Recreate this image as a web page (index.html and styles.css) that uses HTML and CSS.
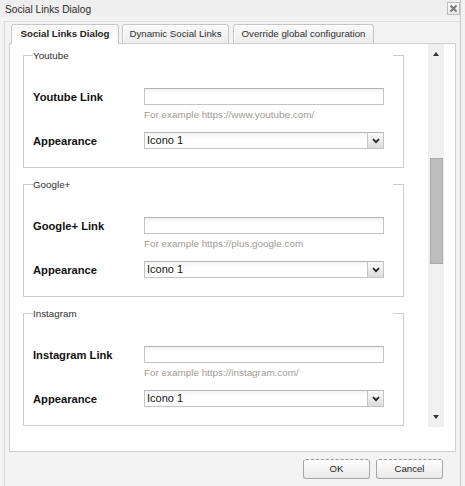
FILE: index.html
```html
<!DOCTYPE html>
<html>
<head>
<meta charset="utf-8">
<link rel="stylesheet" href="styles.css">
</head>
<body>
<div class="dialog">
  <div class="titlebar">
    <span class="title">Social Links Dialog</span>
    <span class="close"><svg width="11" height="11" viewBox="0 0 11 11"><path d="M2.5 2.5 L8.5 8.5 M8.5 2.5 L2.5 8.5" stroke="#7a7a7a" stroke-width="2" fill="none"/></svg></span>
  </div>
  <div class="body">
    <div class="tabs">
      <div class="tab active">Social Links Dialog</div>
      <div class="tab t2">Dynamic Social Links</div>
      <div class="tab t3">Override global configuration</div>
    </div>
    <div class="panel">
      <div class="scroll">
        <div class="content">
          <fieldset class="group">
            <legend>Youtube</legend>
            <div class="grid">
              <label class="lbl">Youtube Link</label>
              <div class="input"></div>
              <span></span>
              <div class="hint">For example https://www.youtube.com/</div>
              <label class="lbl row3">Appearance</label>
              <div class="select row3"><span class="val">Icono 1</span><span class="btn"><svg width="8" height="6" viewBox="0 0 8 6"><path d="M1 1.2 L4 4.2 L7 1.2" stroke="#222" stroke-width="1.8" fill="none"/></svg></span></div>
            </div>
          </fieldset>
          <fieldset class="group">
            <legend>Google+</legend>
            <div class="grid">
              <label class="lbl">Google+ Link</label>
              <div class="input"></div>
              <span></span>
              <div class="hint">For example https://plus.google.com</div>
              <label class="lbl row3">Appearance</label>
              <div class="select row3"><span class="val">Icono 1</span><span class="btn"><svg width="8" height="6" viewBox="0 0 8 6"><path d="M1 1.2 L4 4.2 L7 1.2" stroke="#222" stroke-width="1.8" fill="none"/></svg></span></div>
            </div>
          </fieldset>
          <fieldset class="group">
            <legend>Instagram</legend>
            <div class="grid">
              <label class="lbl">Instagram Link</label>
              <div class="input"></div>
              <span></span>
              <div class="hint">For example https://instagram.com/</div>
              <label class="lbl row3">Appearance</label>
              <div class="select row3"><span class="val">Icono 1</span><span class="btn"><svg width="8" height="6" viewBox="0 0 8 6"><path d="M1 1.2 L4 4.2 L7 1.2" stroke="#222" stroke-width="1.8" fill="none"/></svg></span></div>
            </div>
          </fieldset>
        </div>
        <div class="scrollbar">
          <div class="arrow-box"><span class="tri up"></span></div>
          <div class="track"><div class="thumb"></div></div>
          <div class="arrow-box"><span class="tri down"></span></div>
        </div>
      </div>
    </div>
    <div class="footer">
      <button class="button">OK</button>
      <button class="button">Cancel</button>
    </div>
  </div>
</div>
</body>
</html>
```

FILE: styles.css
```css
html, body {
  margin: 0;
  padding: 0;
  background: #f2f2f2;
  font-family: "Liberation Sans", Arial, sans-serif;
}

.dialog {
  width: 460px;
  height: 486px;
  border-right: 1px solid #c9c9c9;
  background: #f2f2f2;
  display: flex;
  flex-direction: column;
}

.titlebar {
  height: 21px;
  display: flex;
  align-items: flex-start;
  background: linear-gradient(#eeeeee, #efefef 15px, #f6f6f6);
  box-sizing: border-box;
}

.title {
  font-size: 10.2px;
  line-height: 20px;
  color: #2a2a2a;
  padding-left: 5px;
}

.close {
  margin-left: auto;
  margin-top: 2px;
  margin-right: 0;
  width: 11px;
  height: 11px;
  border: 1px solid #bdbdbd;
  background: linear-gradient(#fbfbfb, #e6e6e6);
  display: flex;
}

.body {
  flex: 1;
  margin-left: 4px;
  border-left: 1px solid #d9d9d9;
  border-top: 1px solid #dcdcdc;
  display: flex;
  flex-direction: column;
  background: #f3f3f3;
}

.tabs {
  display: flex;
  margin-top: 2px;
  margin-left: 6px;
  height: 19px;
  position: relative;
  z-index: 2;
}

.tab {
  box-sizing: border-box;
  height: 19px;
  border: 1px solid #c6c6c6;
  border-bottom: none;
  border-radius: 3px 3px 0 0;
  background: linear-gradient(#fafafa, #ececec);
  font-size: 9.7px;
  color: #2e2e2e;
  line-height: 18px;
  text-align: center;
  box-shadow: inset 1px 1px 0 #ffffff;
}

.tab.active {
  width: 108px;
  height: 20px;
  font-weight: bold;
  color: #222;
  background: linear-gradient(#f6f6f6, #ffffff 17px);
}

.tab.t2 {
  width: 107px;
  margin-left: 3px;
}

.tab.t3 {
  width: 141px;
  margin-left: 4px;
}

.panel {
  margin-left: 4px;
  width: 447px;
  height: 409px;
  box-sizing: border-box;
  border: 1px solid #d0d0d0;
  background: #ffffff;
  padding-right: 11px;
  padding-bottom: 24px;
  position: relative;
  z-index: 1;
}

.scroll {
  display: flex;
  height: 383px;
}

.content {
  width: 418px;
  height: 383px;
  overflow: hidden;
  box-sizing: border-box;
  padding-top: 5px;
  padding-left: 13px;
  display: flex;
  flex-direction: column;
  gap: 10px;
}

.group {
  margin: 0;
  min-width: 0;
  width: 381px;
  box-sizing: border-box;
  border: 1px solid #cccccc;
  padding: 0 9px 18px 9px;
  flex: none;
}

.group legend {
  padding: 0;
  width: 360px;
  font-size: 9.8px;
  line-height: 13px;
  color: #2e2e2e;
  background: #ffffff;
}

.grid {
  display: grid;
  grid-template-columns: 111px 240px;
  align-items: center;
  margin-top: 26px;
}

.lbl {
  font-size: 11.2px;
  font-weight: bold;
  color: #111;
  line-height: 17px;
  position: relative;
  top: 1px;
}

.input {
  height: 17px;
  box-sizing: border-box;
  border: 1px solid #c3c3c3;
  border-top-color: #b3b3b3;
  background: linear-gradient(#f1f1f1, #ffffff 5px);
}

.hint {
  grid-column: 2;
  font-size: 9.9px;
  line-height: 14px;
  color: #a09a95;
  margin-top: 3px;
}

.row3 {
  margin-top: 10px;
}

.select {
  height: 17px;
  box-sizing: border-box;
  border: 1px solid #c3c3c3;
  border-top-color: #b3b3b3;
  background: linear-gradient(#f4f4f4, #ffffff 6px);
  display: flex;
}

.select .val {
  flex: 1;
  font-size: 11px;
  line-height: 15px;
  padding-left: 2px;
  color: #111;
}

.select .btn {
  width: 15px;
  border-left: 1px solid #c6c6c6;
  background: linear-gradient(#fbfbfb, #dddddd);
  display: flex;
  align-items: center;
  justify-content: center;
}

.scrollbar {
  width: 16px;
  height: 383px;
  background: #f0f0f0;
  display: flex;
  flex-direction: column;
}

.arrow-box {
  height: 20px;
  display: flex;
  align-items: center;
  justify-content: center;
  flex: none;
}

.tri {
  width: 0;
  height: 0;
  border-left: 3.5px solid transparent;
  border-right: 3.5px solid transparent;
}

.tri.up {
  border-bottom: 4px solid #333;
}

.tri.down {
  border-top: 4px solid #333;
}

.track {
  flex: 1;
}

.thumb {
  margin-top: 94px;
  margin-left: 2px;
  width: 13px;
  height: 106px;
  box-sizing: border-box;
  background: #bdbdbd;
  border: 1px solid #a9a9a9;
}

.footer {
  display: flex;
  justify-content: flex-end;
  gap: 6px;
  padding-top: 7px;
  padding-right: 17px;
}

.button {
  width: 67px;
  height: 20px;
  box-sizing: border-box;
  border: 1px solid #a7a7a7;
  border-top: 1px dashed #9a9a9a;
  border-radius: 3px;
  background: linear-gradient(#ffffff, #e9e9e9);
  font-family: "Liberation Sans", Arial, sans-serif;
  font-size: 9.6px;
  color: #222;
  padding: 0;
  line-height: 18px;
}
```
